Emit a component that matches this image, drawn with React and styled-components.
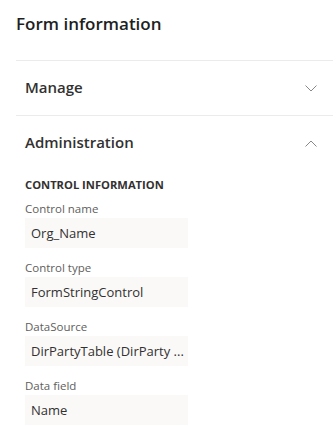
import React, { useState } from 'react';
import styled, { createGlobalStyle } from 'styled-components';

const GlobalStyle = createGlobalStyle`
  body {
    margin: 0;
    background: #ffffff;
    font-family: "Open Sans", "Noto Sans", sans-serif;
    color: #323130;
  }
`;

const Panel = styled.div`
  width: 333px;
  padding: 6px 0 0 16px;
  box-sizing: border-box;
`;

const Title = styled.h1`
  margin: 0;
  font-size: 17px;
  line-height: 36px;
  font-weight: 600;
  color: #201f1e;
  height: 54px;
`;

const Section = styled.div`
  border-top: 1px solid #edebe9;
`;

const Header = styled.button`
  display: flex;
  align-items: center;
  justify-content: space-between;
  width: 100%;
  height: 54px;
  padding: 0 16px 3px 9px;
  border: 0;
  background: transparent;
  font-family: inherit;
  font-size: 15px;
  font-weight: 600;
  color: #323130;
  cursor: pointer;

  svg {
    margin-top: 3px;
  }
`;

const Body = styled.div`
  padding: 0 0 0 9px;
`;

const Caption = styled.div`
  font-size: 11.2px;
  font-weight: 700;
  line-height: 16px;
  color: #323130;
  text-transform: uppercase;
  margin: 7px 0 7px;
`;

const Field = styled.div`
  margin-bottom: 11px;
`;

const Label = styled.div`
  font-size: 11.5px;
  line-height: 18px;
  color: #605e5c;
`;

const Value = styled.div`
  width: 163px;
  height: 30px;
  box-sizing: border-box;
  background: #faf9f8;
  padding: 0 6px;
  font-size: 13px;
  line-height: 30px;
  color: #323130;
  white-space: nowrap;
  overflow: hidden;
`;

const Chevron = ({ up }) => (
  <svg width="12" height="7" viewBox="0 0 12 7" fill="none">
    <path
      d={up ? 'M0.5 6.5 L6 1 L11.5 6.5' : 'M0.5 0.5 L6 6 L11.5 0.5'}
      stroke="#8a8886"
      strokeWidth="1"
    />
  </svg>
);

const fields = [
  { label: 'Control name', value: 'Org_Name' },
  { label: 'Control type', value: 'FormStringControl' },
  { label: 'DataSource', value: 'DirPartyTable (DirParty ...' },
  { label: 'Data field', value: 'Name' },
];

export default function App() {
  const [open, setOpen] = useState({ manage: false, admin: true });

  return (
    <>
      <GlobalStyle />
      <Panel>
        <Title>Form information</Title>
        <Section>
          <Header onClick={() => setOpen({ ...open, manage: !open.manage })}>
            Manage
            <Chevron up={open.manage} />
          </Header>
        </Section>
        <Section>
          <Header onClick={() => setOpen({ ...open, admin: !open.admin })}>
            Administration
            <Chevron up={open.admin} />
          </Header>
          {open.admin && (
            <Body>
              <Caption>Control information</Caption>
              {fields.map((f) => (
                <Field key={f.label}>
                  <Label>{f.label}</Label>
                  <Value>{f.value}</Value>
                </Field>
              ))}
            </Body>
          )}
        </Section>
      </Panel>
    </>
  );
}
